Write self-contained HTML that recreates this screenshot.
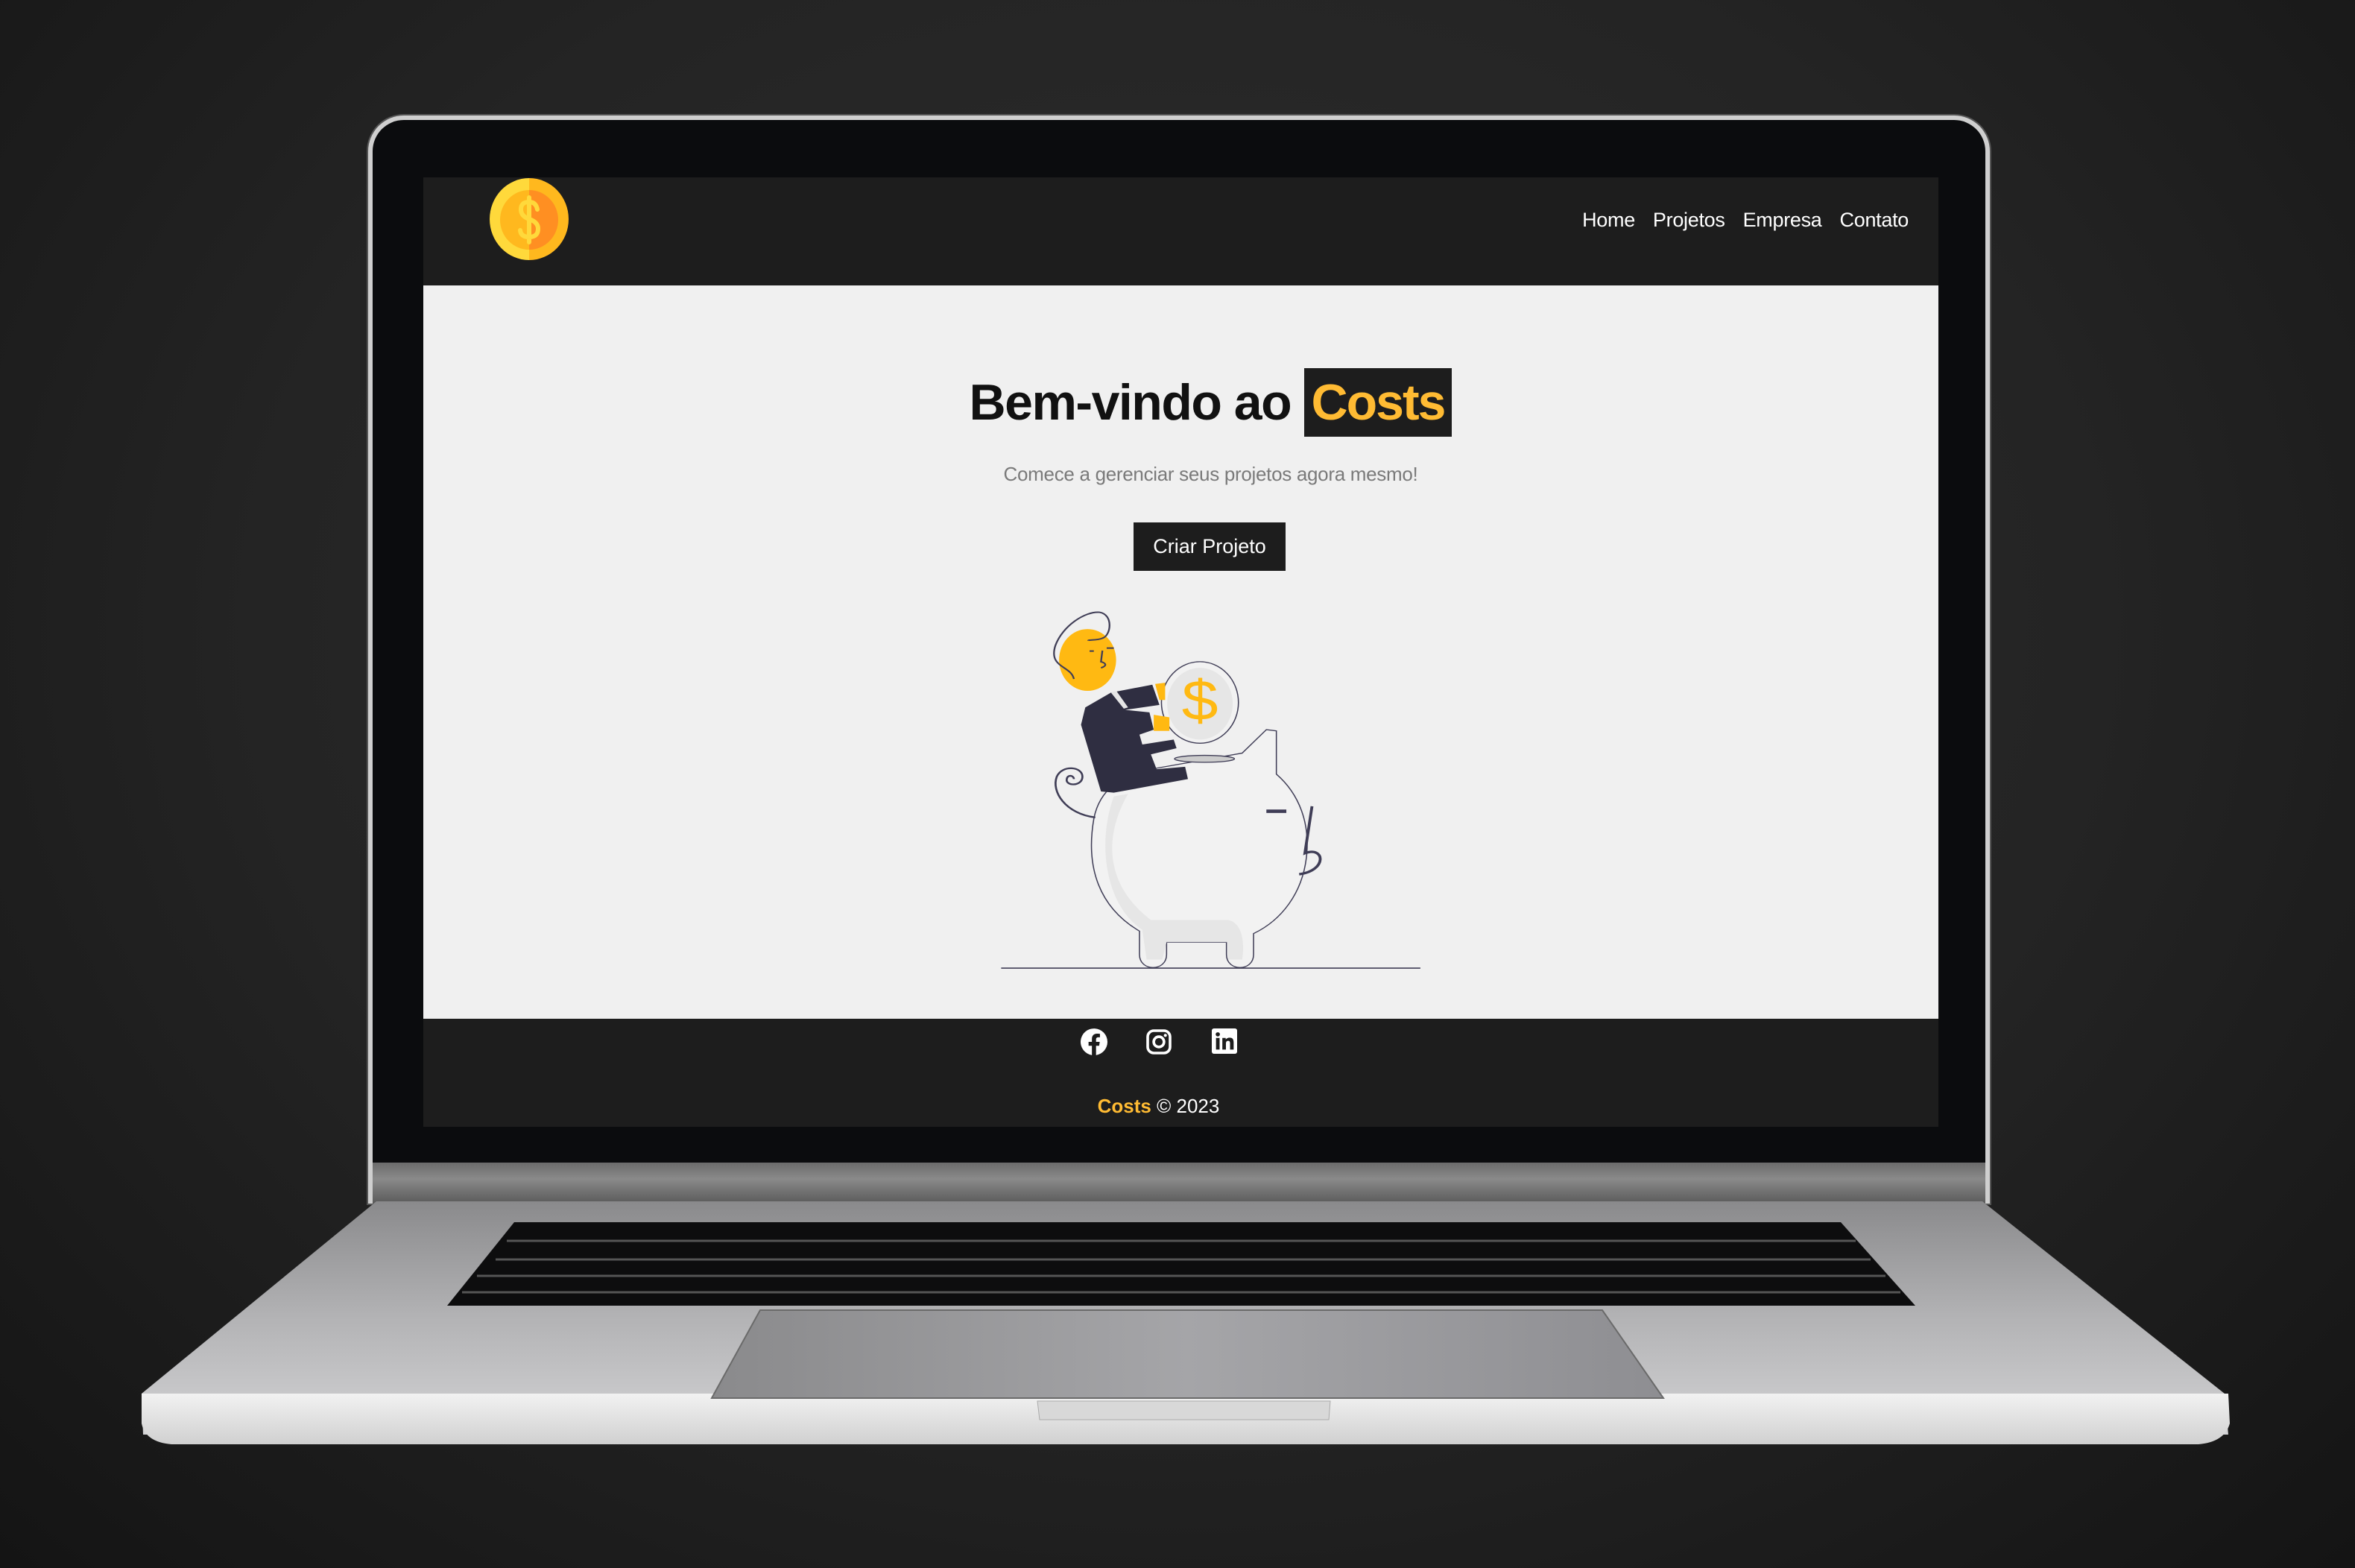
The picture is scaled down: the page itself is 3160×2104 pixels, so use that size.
<!DOCTYPE html>
<html><head><meta charset="utf-8"><style>
*{margin:0;padding:0;box-sizing:border-box}
body{width:3160px;height:2104px;overflow:hidden;background:radial-gradient(ellipse at 50% 40%,#2e2e2e 0%,#242424 55%,#141414 100%);font-family:"Liberation Sans",sans-serif;position:relative}
.abs{position:absolute}
.lid{left:494px;top:155px;width:2176px;height:1460px;border-radius:48px 48px 0 0;background:#0b0c0e;border:6px solid #cfcfcf;border-bottom:none;box-shadow:0 0 0 2px #555}
.nav{left:568px;top:238px;width:2033px;height:145px;background:#1d1d1d}
.main{left:568px;top:383px;width:2033px;height:984px;background:#f0f0f0}
.foot{left:568px;top:1367px;width:2033px;height:145px;background:#1d1d1d}
.navlinks{position:absolute;right:40px;top:42px;color:#fff;font-size:27px;display:flex;gap:24px;letter-spacing:-0.3px}
h1{position:absolute;left:0;width:100%;text-align:center;font-size:68px;font-weight:bold;color:#111;line-height:92px;letter-spacing:-1.5px}
h1 span{background:#1d1d1d;color:#ffbb33;padding:0 10px;display:inline-block;letter-spacing:-2px}
</style></head><body>
<div class="abs lid"></div>
<div class="abs" style="left:500px;top:1560px;width:2164px;height:55px;background:linear-gradient(#6b6b6b,#8a8a8a 40%,#5a5a5a)"></div>
<svg class="abs" style="left:0;top:0" width="3160" height="2104">
<defs>
<linearGradient id="base" x1="0" y1="0" x2="0" y2="1"><stop offset="0" stop-color="#8a8a8c"/><stop offset="0.5" stop-color="#b3b3b5"/><stop offset="1" stop-color="#d2d2d4"/></linearGradient>
<linearGradient id="lip" x1="0" y1="0" x2="0" y2="1"><stop offset="0" stop-color="#f2f2f2"/><stop offset="1" stop-color="#d0d0d0"/></linearGradient>
<linearGradient id="pad" x1="0" y1="0" x2="1" y2="0"><stop offset="0" stop-color="#8a8a8c"/><stop offset="0.5" stop-color="#a5a5a8"/><stop offset="1" stop-color="#8e8e92"/></linearGradient>
</defs>
<path d="M505 1612 L2660 1612 L2985 1870 L2990 1925 L192 1925 L190 1870 Z" fill="url(#base)"/>
<path d="M190 1870 L2990 1870 L2992 1910 Q2985 1935 2950 1938 L230 1938 Q195 1935 190 1910 Z" fill="url(#lip)"/>
<path d="M1392 1880 L1785 1880 L1783 1905 L1395 1905 Z" fill="#d8d8d8" stroke="#aaa"/>
<path d="M690 1640 L2470 1640 L2570 1752 L600 1752 Z" fill="#0d0d0e"/>
<g stroke="#555" stroke-width="3">
<line x1="680" y1="1665" x2="2490" y2="1665"/><line x1="665" y1="1690" x2="2510" y2="1690"/><line x1="640" y1="1712" x2="2530" y2="1712"/><line x1="620" y1="1734" x2="2550" y2="1734"/>
</g>
<path d="M1020 1758 L2150 1758 L2232 1876 L955 1876 Z" fill="url(#pad)" stroke="#6a6a6a" stroke-width="2"/>
</svg>
<div class="abs nav">
 <svg class="abs" style="left:89px;top:1px" width="106" height="110" viewBox="0 0 106 110">
  <path d="M53 0 A53 55 0 0 0 53 110 Z" fill="#ffd93b"/><path d="M53 0 A53 55 0 0 1 53 110 Z" fill="#ffb81e"/>
  <path d="M53 16 A39 40 0 0 0 53 96 Z" fill="#ffb81e"/><path d="M53 16 A39 40 0 0 1 53 96 Z" fill="#ff8f22"/>
  <path d="M64 42 Q62 32 53 32 Q42 32 42 42 Q42 51 53 55 Q65 59 65 68 Q65 79 53 79 Q42 79 41 70 M53 26 V86" stroke="#ffd93b" stroke-width="6" fill="none" stroke-linecap="round"/>
 </svg>
 <div class="navlinks"><span>Home</span><span>Projetos</span><span>Empresa</span><span>Contato</span></div>
</div>
<div class="abs main">
 <h1 style="top:111px;left:40px">Bem-vindo ao <span>Costs</span></h1>
 <div class="abs" style="top:238px;left:40px;width:100%;text-align:center;font-size:26px;color:#7a7a7a;letter-spacing:-0.3px">Comece a gerenciar seus projetos agora mesmo!</div>
 <div class="abs" style="left:953px;top:318px;width:204px;height:65px;background:#1d1d1d;color:#fff;font-size:27px;line-height:65px;text-align:center">Criar Projeto</div>
</div>
<svg class="abs" style="left:1330px;top:800px" width="600" height="520" viewBox="0 0 1568 1568" preserveAspectRatio="none">
 <line x1="35" y1="1505" x2="1505" y2="1505" stroke="#3f3d56" stroke-width="5"/>
 <path d="M520 1355 C380 1260 330 1100 360 900 C380 780 460 720 560 700 L880 635 L965 540 L1000 545 L1000 720 C1080 800 1120 920 1105 1060 C1090 1200 1020 1310 920 1365 L920 1450 C920 1520 825 1520 825 1450 L825 1400 L615 1400 L615 1450 C615 1520 520 1520 520 1450 Z" fill="#f2f2f2" stroke="#3f3d56" stroke-width="4"/>
 <path d="M480 800 C400 960 390 1160 560 1310 L830 1310 C880 1320 890 1400 880 1470 L830 1470 L830 1400 L615 1400 L600 1470 L545 1470 L530 1350 C400 1250 370 1000 430 810 Z" fill="#e4e4e4" opacity="0.9"/>
 <line x1="965" y1="870" x2="1035" y2="870" stroke="#3f3d56" stroke-width="14"/>
 <path d="M1125 850 L1100 1040 C1170 1010 1180 1110 1080 1125" fill="none" stroke="#3f3d56" stroke-width="10"/>
 <path d="M365 895 C260 880 210 790 230 730 C250 680 320 690 320 730 C320 770 260 770 265 740 C268 720 290 725 290 740" fill="none" stroke="#3f3d56" stroke-width="7"/>
 <ellipse cx="748" cy="658" rx="105" ry="14" fill="#ccc" stroke="#3f3d56" stroke-width="4"/>
 <ellipse cx="732" cy="430" rx="135" ry="165" fill="#f2f2f2" stroke="#3f3d56" stroke-width="4"/>
 <ellipse cx="732" cy="435" rx="115" ry="145" fill="#e6e6e6"/>
 <text x="732" y="500" text-anchor="middle" font-family="Liberation Sans,sans-serif" font-size="230" fill="#ffb912">$</text>
 <path d="M575 355 L610 350 L610 420 L590 420 Z M570 480 L625 490 L625 545 L570 545 Z" fill="#ffb912"/>
 <ellipse cx="338" cy="258" rx="100" ry="125" fill="#ffb912"/>
 <path d="M290 335 C280 280 200 290 225 200 C250 120 330 60 380 65 C430 75 420 160 390 170 C370 180 340 175 340 180 M345 222 L360 222 M405 210 L430 210 M390 220 L385 265 C400 270 410 280 385 290" fill="none" stroke="#3f3d56" stroke-width="6"/>
 <path d="M330 450 L420 390 L565 358 L590 440 L470 460 L555 470 L570 540 L520 560 L530 600 L640 580 L650 615 L560 640 L580 700 L680 690 L690 740 L430 795 L385 790 L315 520 Z" fill="#2f2e41"/>
 <path d="M420 390 L465 455 L480 450 L440 385 Z" fill="#e6e6e6"/>
</svg>
<div class="abs foot">
 <svg class="abs" style="left:882px;top:13px" width="36" height="36" viewBox="0 0 24 24"><path fill="#fff" d="M24 12a12 12 0 1 0-13.9 11.9v-8.4H7.1V12h3V9.4c0-3 1.8-4.7 4.5-4.7 1.3 0 2.7.2 2.7.2v3h-1.5c-1.5 0-2 .9-2 1.9V12h3.3l-.5 3.5h-2.8v8.4A12 12 0 0 0 24 12z"/></svg>
 <svg class="abs" style="left:969px;top:13px" width="36" height="36" viewBox="0 0 24 24"><rect x="2" y="2" width="20" height="20" rx="5.5" fill="none" stroke="#fff" stroke-width="2.4"/><circle cx="12" cy="12" r="4.6" fill="none" stroke="#fff" stroke-width="2.4"/><circle cx="17.8" cy="6.2" r="1.4" fill="#fff"/></svg>
 <svg class="abs" style="left:1058px;top:13px" width="34" height="34" viewBox="0 0 24 24"><rect x="0" y="0" width="24" height="24" rx="2" fill="#fff"/><rect x="4" y="9" width="3.4" height="11" fill="#1d1d1d"/><circle cx="5.7" cy="5.6" r="2" fill="#1d1d1d"/><path d="M10 9h3.2v1.6c.6-1 1.8-1.9 3.6-1.9 3.3 0 3.9 2.1 3.9 5V20h-3.4v-5.4c0-1.3 0-2.9-1.8-2.9s-2.1 1.4-2.1 2.8V20H10z" fill="#1d1d1d"/></svg>
 <div class="abs" style="top:102px;left:-30px;width:100%;text-align:center;font-size:26px;color:#fff"><b style="color:#ffbb33">Costs</b> © 2023</div>
</div>
</body></html>
